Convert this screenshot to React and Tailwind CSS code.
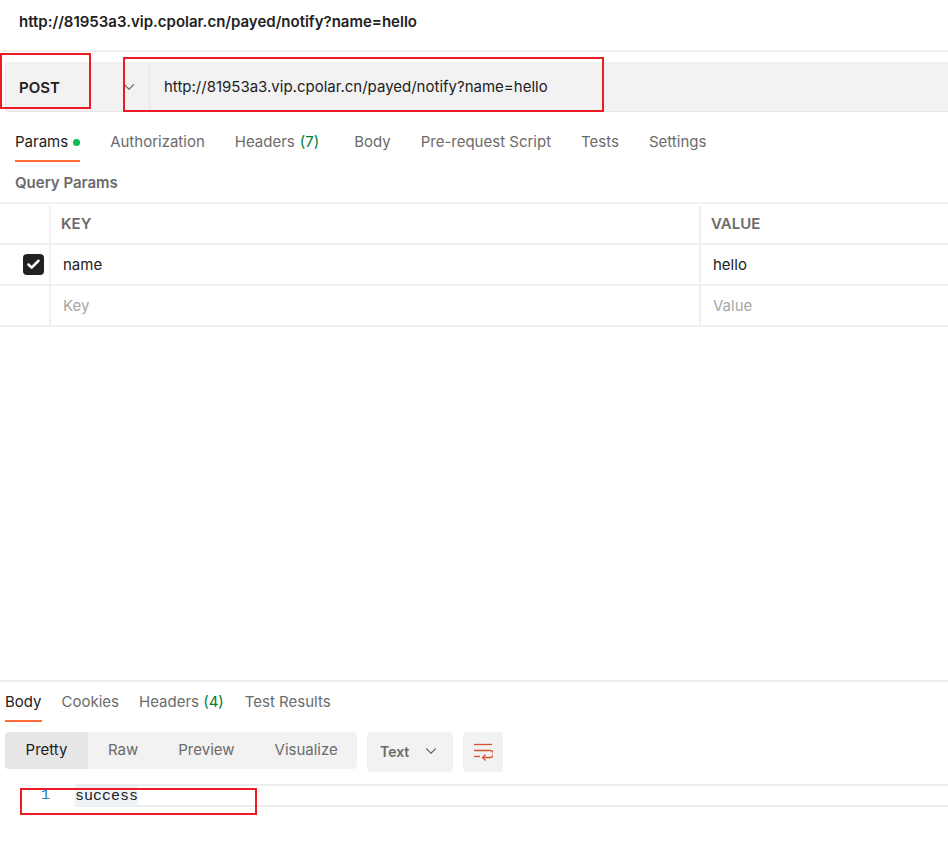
import React from 'react';
import { ChevronDown, Check } from 'lucide-react';

const requestTabs = [
  { label: 'Authorization', className: 'ml-[30px]' },
  { label: 'Headers', count: '(7)', className: 'ml-[30px]' },
  { label: 'Body', className: 'ml-[35px]' },
  { label: 'Pre-request Script', className: 'ml-[30px]' },
  { label: 'Tests', className: 'ml-[30px]' },
  { label: 'Settings', className: 'ml-[30px]' },
];

const ParamRow = ({ name, value, checked, muted }) => (
  <div className={`flex h-[41px] border-b-2 border-[#f0f0f0] text-[15px] ${muted ? 'text-[#a6a6a6]' : 'text-[#212121]'}`}>
    <div className="flex w-[51px] shrink-0 items-center border-r-2 border-[#f0f0f0] pl-[23px]">
      {checked && (
        <span className="flex h-[21px] w-[21px] items-center justify-center rounded-[4px] bg-[#212121]">
          <Check className="h-[15px] w-[15px] text-white" strokeWidth={4} />
        </span>
      )}
    </div>
    <div className={`flex w-[650px] shrink-0 items-center border-r-2 border-[#f0f0f0] pl-[12px] ${muted ? 'pt-[1px]' : 'pt-[2px]'}`}>{name}</div>
    <div className={`flex items-center pl-[12px] ${muted ? 'pt-[1px]' : 'pt-[2px]'}`}>{value}</div>
  </div>
);

const WrapIcon = () => (
  <svg width="20" height="18" viewBox="0 0 20 18" fill="none" stroke="#d8502c" strokeWidth="1.3">
    <path d="M1 1.5h18" />
    <path d="M1 7.5h16a2.5 2.5 0 0 1 0 7h-7" />
    <path d="M1 13.5h6" />
    <path d="M12.5 11.5l-3 3 3 3" />
  </svg>
);

export default function App() {
  return (
    <div className="relative h-[860px] w-[948px] overflow-hidden bg-white font-['Inter',sans-serif] text-[15px] text-[#212121]">
      {/* Title */}
      <div className="flex h-[52px] items-start border-b-2 border-[#f0f0f0] pl-[19px] pt-[13px] font-semibold leading-[18px]">
        http://81953a3.vip.cpolar.cn/payed/notify?name=hello
      </div>

      {/* URL bar */}
      <div className="ml-[5px] mt-[10px] flex h-[50px] items-center rounded-l-[4px] border-b border-l border-[#e6e6e6] bg-[#f2f2f2]">
        <span className="ml-[13px] w-[101px] pt-[3px] font-semibold">POST</span>
        <ChevronDown className="h-[18px] w-[18px] text-[#757575]" strokeWidth={1.6} />
        <div className="ml-[11px] flex h-full items-center border-l border-[#e6e6e6] pl-[14px] pt-[2px] text-[#212121]">
          http://81953a3.vip.cpolar.cn/payed/notify?name=hello
        </div>
      </div>

      {/* Request tabs */}
      <div className="ml-[15px] mt-[18px] flex h-[32px] items-start leading-[24px] text-[#6b6b6b]">
        <div className="flex h-[32px] items-start border-b-2 border-[#ff6c37] text-[#212121]">
          <span>Params</span>
          <span className="ml-[5px] mt-[9px] h-[7px] w-[7px] rounded-full bg-[#0cbb52]" />
        </div>
        {requestTabs.map((tab) => (
          <span key={tab.label} className={tab.className}>
            {tab.label}
            {tab.count && <span className="ml-[5px] text-[#007f31]">{tab.count}</span>}
          </span>
        ))}
      </div>

      <div className="ml-[15px] mt-[12px] font-semibold leading-[18px] text-[#6b6b6b]">Query Params</div>

      {/* Params table */}
      <div className="mt-[10px] border-t-2 border-[#f0f0f0]">
        <div className="flex h-[41px] border-b-2 border-[#f0f0f0] font-semibold text-[#6b6b6b]">
          <div className="mt-[2px] w-[51px] shrink-0 border-r-2 border-[#f0f0f0]" />
          <div className="mt-[2px] flex w-[650px] shrink-0 items-center border-r-2 border-[#f0f0f0] pl-[10px]">KEY</div>
          <div className="mt-[2px] flex items-center pl-[10px]">VALUE</div>
        </div>
        <ParamRow name="name" value="hello" checked />
        <ParamRow name="Key" value="Value" muted />
      </div>

      {/* Response */}
      <div className="mt-[353px] border-t-2 border-[#ededed]">
        <div className="ml-[5px] mt-[8px] flex h-[32px] items-start leading-[24px] text-[#6b6b6b]">
          <span className="h-[32px] border-b-2 border-[#ff6c37] text-[#212121]">Body</span>
          <span className="ml-[20px]">Cookies</span>
          <span className="ml-[20px]">
            Headers <span className="text-[#007f31]">(4)</span>
          </span>
          <span className="ml-[21px]">Test Results</span>
        </div>

        <div className="ml-[5px] mt-[10px] flex items-start">
          <div className="flex h-[37px] w-[352px] items-center rounded-[4px] bg-[#f2f2f2] text-[#6b6b6b]">
            <span className="flex h-[37px] w-[83px] items-center justify-center rounded-l-[4px] bg-[#e6e6e6] text-[#212121]">Pretty</span>
            <span className="ml-[20px]">Raw</span>
            <span className="ml-[40px]">Preview</span>
            <span className="ml-[40px]">Visualize</span>
          </div>
          <div className="ml-[10px] flex h-[40px] w-[86px] items-center rounded-[4px] bg-[#f2f2f2] pb-[2px] pl-[13px] text-[#6b6b6b]">
            <span className="text-[14px] font-semibold">Text</span>
            <ChevronDown className="ml-[13px] h-[18px] w-[18px]" strokeWidth={1.5} />
          </div>
          <div className="ml-[10px] flex h-[40px] w-[40px] items-center justify-center rounded-[4px] bg-[#f2f2f2]">
            <WrapIcon />
          </div>
        </div>

        {/* Response body */}
        <div className="mt-[12px] flex h-[23px] items-center">
          <span className="w-[75px] pr-[25px] pt-[1px] text-right font-['Liberation_Mono',monospace] text-[15px] text-[#2a7ab8]">1</span>
          <div className="flex h-full flex-1 items-center border-y-2 border-[#ebedf0]">
            <span className="bg-[#eef2f9] pt-[1px] font-['Liberation_Mono',monospace] text-[15px] leading-[19px] text-[#212121]">success</span>
          </div>
        </div>
      </div>

      {/* Red annotation boxes */}
      <div className="absolute left-0 top-[53px] h-[56px] w-[91px] border-2 border-[#ed1c24]" />
      <div className="absolute left-[123px] top-[57px] h-[55px] w-[481px] border-2 border-[#ed1c24]" />
      <div className="absolute left-[20px] top-[788px] h-[27px] w-[237px] border-2 border-[#ed1c24]" />
    </div>
  );
}
